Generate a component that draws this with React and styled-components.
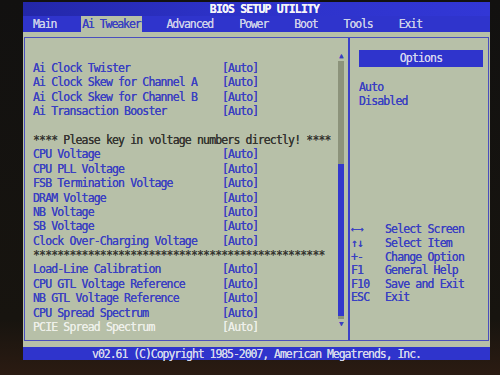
import styled, { createGlobalStyle } from "styled-components";

const GlobalStyle = createGlobalStyle`
    html, body {
        margin: 0;
        padding: 0;
        width: 500px;
        height: 375px;
        overflow: hidden;
        background: linear-gradient(180deg, #121110 0%, #17140f 85%, #2b1b12 100%);
    }
`;

const SAGE = "#b7c0a8";
const BLUE = "#3a3fc2";
const BAR = "#2f34cc";

const Screen = styled.div`
    margin: 2px 0 0 23px;
    width: 467px;
    display: flex;
    flex-direction: column;
    font-family: "DejaVu Sans Mono", "Liberation Mono", monospace;
    font-size: 11.5px;
    letter-spacing: -0.85px;
    text-shadow: 0 0 0.5px currentColor;
`;

const TitleBar = styled.div`
    height: 14px;
    line-height: 15px;
    background: linear-gradient(90deg, #2327a8 0%, #2c31c6 40%, #3237d6 100%);
    color: #f4f4f8;
    font-weight: 700;
    text-align: center;
    padding-left: 16px;
`;

const MenuBar = styled.nav`
    height: 16px;
    background: ${BAR};
    display: flex;
    gap: 24px;
    padding-left: 9px;
`;

const Tab = styled.span`
    padding: 0 1px;
    line-height: 17px;
    letter-spacing: -1.1px;
    color: ${(p) => (p.$active ? BLUE : "#cdd0ea")};
    background: ${(p) => (p.$active ? SAGE : "transparent")};
`;

const Body = styled.div`
    background: ${SAGE};
    padding: 5px 1px 6px 1px;
`;

const Frame = styled.div`
    height: 302px;
    border: 1px solid #4a4fbe;
    display: grid;
    grid-template-columns: 325px 1fr;
`;

const LeftPanel = styled.div`
    display: flex;
    border-right: 2px solid #3c41c8;
`;

const List = styled.div`
    flex: 1;
    padding: 23px 0 0 8px;
`;

const Row = styled.div`
    display: grid;
    grid-template-columns: 189px auto;
    height: 14.4px;
    line-height: 14.4px;
    white-space: pre;
    color: ${(p) =>
        p.$tone === "white" ? "#eef0ea" : p.$tone === "dark" ? "#34342f" : BLUE};
`;

const Scrollbar = styled.div`
    width: 8px;
    margin: 14px 3px 0 0;
    display: flex;
    flex-direction: column;
    align-items: center;
`;

const Arrow = styled.span`
    color: ${BLUE};
    font-size: 7px;
    line-height: 8px;
    height: 8px;
`;

const Track = styled.div`
    width: 6px;
    height: 258px;
    margin: 1px 0;
    background: #8c937b;
    display: flex;
    flex-direction: column;
    justify-content: flex-end;
    padding-bottom: 3px;
    box-sizing: border-box;
`;

const Thumb = styled.div`
    height: 152px;
    background: #3338cc;
`;

const RightPanel = styled.div`
    display: flex;
    flex-direction: column;
`;

const OptionsHeader = styled.div`
    margin: 12px 5px 0 9px;
    height: 17px;
    line-height: 17px;
    background: ${BAR};
    color: #d3d3ef;
    text-align: center;
`;

const Options = styled.div`
    padding: 13px 0 0 9px;
    color: ${BLUE};
    line-height: 14.2px;
`;

const Help = styled.div`
    margin-top: auto;
    padding: 0 0 35px 1px;
    color: ${BLUE};
`;

const HelpRow = styled.div`
    display: grid;
    grid-template-columns: 34px auto;
    height: 13.6px;
    line-height: 13.6px;
`;

const Footer = styled.div`
    height: 13px;
    line-height: 14px;
    background: ${BAR};
    color: #d6d8ec;
    text-align: center;
    letter-spacing: -1.05px;
`;

const rows = [
    { label: "Ai Clock Twister", value: "[Auto]" },
    { label: "Ai Clock Skew for Channel A", value: "[Auto]" },
    { label: "Ai Clock Skew for Channel B", value: "[Auto]" },
    { label: "Ai Transaction Booster", value: "[Auto]" },
    { label: "", value: "" },
    { label: "**** Please key in voltage numbers directly! ****", tone: "dark" },
    { label: "CPU Voltage", value: "[Auto]" },
    { label: "CPU PLL Voltage", value: "[Auto]" },
    { label: "FSB Termination Voltage", value: "[Auto]" },
    { label: "DRAM Voltage", value: "[Auto]" },
    { label: "NB Voltage", value: "[Auto]" },
    { label: "SB Voltage", value: "[Auto]" },
    { label: "Clock Over-Charging Voltage", value: "[Auto]" },
    { label: "*".repeat(48), tone: "dark" },
    { label: "Load-Line Calibration", value: "[Auto]" },
    { label: "CPU GTL Voltage Reference", value: "[Auto]" },
    { label: "NB GTL Voltage Reference", value: "[Auto]" },
    { label: "CPU Spread Spectrum", value: "[Auto]" },
    { label: "PCIE Spread Spectrum", value: "[Auto]", tone: "white" },
];

const tabs = ["Main", "Ai Tweaker", "Advanced", "Power", "Boot", "Tools", "Exit"];

const help = [
    ["←→", "Select Screen"],
    ["↑↓", "Select Item"],
    ["+-", "Change Option"],
    ["F1", "General Help"],
    ["F10", "Save and Exit"],
    ["ESC", "Exit"],
];

export default function App() {
    return (
        <>
            <GlobalStyle />
            <Screen>
                <TitleBar>BIOS SETUP UTILITY</TitleBar>
                <MenuBar>
                    {tabs.map((t) => (
                        <Tab key={t} $active={t === "Ai Tweaker"}>
                            {t}
                        </Tab>
                    ))}
                </MenuBar>
                <Body>
                    <Frame>
                        <LeftPanel>
                            <List>
                                {rows.map((r, i) => (
                                    <Row key={i} $tone={r.tone}>
                                        {r.value === undefined ? (
                                            <span style={{ gridColumn: "1 / -1" }}>{r.label}</span>
                                        ) : (
                                            <>
                                                <span>{r.label}</span>
                                                <span>{r.value}</span>
                                            </>
                                        )}
                                    </Row>
                                ))}
                            </List>
                            <Scrollbar>
                                <Arrow>▲</Arrow>
                                <Track>
                                    <Thumb />
                                </Track>
                                <Arrow>▼</Arrow>
                            </Scrollbar>
                        </LeftPanel>
                        <RightPanel>
                            <OptionsHeader>Options</OptionsHeader>
                            <Options>
                                <div>Auto</div>
                                <div>Disabled</div>
                            </Options>
                            <Help>
                                {help.map(([k, d]) => (
                                    <HelpRow key={k}>
                                        <span>{k}</span>
                                        <span>{d}</span>
                                    </HelpRow>
                                ))}
                            </Help>
                        </RightPanel>
                    </Frame>
                </Body>
                <Footer>v02.61 (C)Copyright 1985-2007, American Megatrends, Inc.</Footer>
            </Screen>
        </>
    );
}
